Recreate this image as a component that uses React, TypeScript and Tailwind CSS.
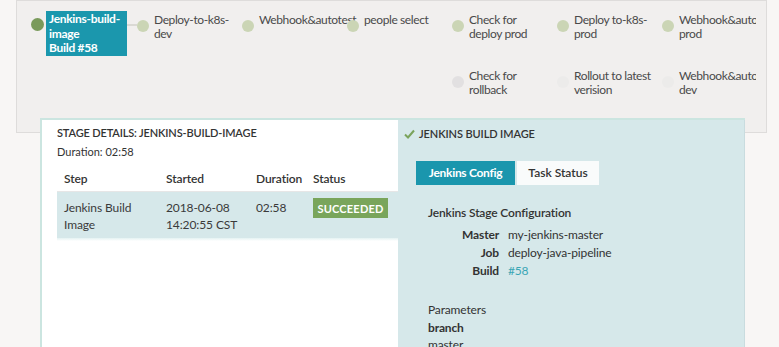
import React from "react";

function Dot({ color }: { color: string }) {
  return <div className="w-[12px] h-[12px] rounded-full shrink-0 mt-[7px]" style={{ backgroundColor: color }} />;
}

function Node({ color, lines }: { color: string; lines: string[] }) {
  return (
    <div className="w-[105px] shrink-0 flex items-start">
      <Dot color={color} />
      <div className="ml-[5px] text-[12px] leading-[14px] text-[#4a4a4a] whitespace-nowrap tracking-[-0.4px]">
        {lines.map((l, i) => (
          <div key={i}>{l}</div>
        ))}
      </div>
    </div>
  );
}

export default function App() {
  return (
    <div className="h-[347px] overflow-hidden bg-[#f8f6f5] font-['Lato',sans-serif] text-[#333]">
      {/* pipeline graph panel */}
      <div className="ml-4 w-[751px] h-[133px] bg-[#f1efee] border border-[#dedcdb]">
        <div className="ml-[14px] w-[725px] overflow-hidden pt-[10px]">
          <div className="flex items-start">
            <div className="w-[106px] shrink-0 flex items-start">
              <div className="w-[13px] h-[13px] rounded-full bg-[#7a9a5b] mt-[7px] shrink-0" />
              <div className="ml-[2px] w-[81px] h-[45px] bg-[#1b97ad] text-white font-bold text-[12px] leading-[14.5px] px-[3px] pt-[1px] tracking-[-0.3px]">
                <div>Jenkins-build-</div>
                <div>image</div>
                <div>Build #58</div>
              </div>
              <div className="w-[10px] h-[2px] bg-[#dad9d4] mt-[13px]" />
            </div>
            <div className="flex items-start mt-[2px]">
              <Node color="#cbd5b5" lines={["Deploy-to-k8s-", "dev"]} />
              <Node color="#cbd5b5" lines={["Webhook&autotest"]} />
              <Node color="#cbd5b5" lines={["people select"]} />
              <Node color="#cbd5b5" lines={["Check for", "deploy prod"]} />
              <Node color="#cbd5b5" lines={["Deploy to-k8s-", "prod"]} />
              <Node color="#cbd5b5" lines={["Webhook&autotest", "prod"]} />
            </div>
          </div>
          <div className="flex items-start mt-[13px] pl-[421px]">
            <Node color="#e2e0e1" lines={["Check for", "rollback"]} />
            <Node color="#ecebea" lines={["Rollout to latest", "verision"]} />
            <Node color="#ecebea" lines={["Webhook&autotest", "dev"]} />
          </div>
        </div>
      </div>

      {/* stage details panel */}
      <div className="relative -mt-[15px] ml-[40px] w-[705px] h-[260px] border-2 border-r-0 border-b-0 border-[#cbe5e0] flex">
        <div className="w-[356px] bg-white pl-[15px] pt-[6px]">
          <div className="text-[11px] leading-[14px] font-semibold tracking-[-0.15px]">STAGE DETAILS: JENKINS-BUILD-IMAGE</div>
          <div className="text-[11px] leading-[14px] mt-[5px]">Duration: 02:58</div>
          <div className="mt-[11px] text-[12px] tracking-[-0.1px]">
            <div className="flex h-[22px] items-start font-semibold border-b border-[#e6e6e6]">
              <div className="w-[102px] pl-[7px]">Step</div>
              <div className="w-[90px] pl-[7px]">Started</div>
              <div className="w-[57px] pl-[7px]">Duration</div>
              <div className="w-[92px] pl-[7px]">Status</div>
            </div>
            <div className="flex h-[46px] bg-[#d6e8ea] pt-[7px] leading-[17px] text-[#3a3a3a]">
              <div className="w-[102px] pl-[7px]">
                <div>Jenkins Build</div>
                <div>Image</div>
              </div>
              <div className="w-[90px] pl-[7px]">
                <div>2018-06-08</div>
                <div>14:20:55 CST</div>
              </div>
              <div className="w-[57px] pl-[7px]">02:58</div>
              <div className="w-[92px] pl-[7px]">
                <div className="w-[75px] h-[20px] -mt-[1px] bg-[#79a55b] text-white font-bold text-[11px] flex items-center justify-center tracking-[0.2px]">
                  SUCCEEDED
                </div>
              </div>
            </div>
            <div className="h-[3px] bg-gradient-to-b from-[#e4f2f2] to-white" />
          </div>
        </div>
        <div className="flex-1 bg-[#d6e8ea] border-r border-[#c9dcdf] pt-[6px]">
          <div className="flex items-center ml-[6px] h-[16px]">
            <svg width="11" height="10" viewBox="0 0 11 10">
              <path d="M1 5.5 L4 8.5 L10 1.5" fill="none" stroke="#7aa35b" strokeWidth="2" />
            </svg>
            <span className="ml-[4px] text-[11px] font-semibold tracking-[-0.1px]">JENKINS BUILD IMAGE</span>
          </div>
          <div className="flex ml-[18px] mt-[19px] gap-[2px] text-[12px] font-bold h-[24px]">
            <div className="w-[99px] bg-[#1a96ad] text-white flex items-center justify-center tracking-[-0.3px]">Jenkins Config</div>
            <div className="w-[82px] bg-[#f9fbfb] text-[#333] flex items-center justify-center font-semibold">Task Status</div>
          </div>
          <div className="ml-[30px] mt-[20px] text-[12px] tracking-[-0.15px]">
            <div className="font-semibold leading-[16px]">Jenkins Stage Configuration</div>
            <div className="mt-[5px] leading-[18px]">
              <div className="flex">
                <div className="w-[71px] text-right font-bold">Master</div>
                <div className="ml-[9px]">my-jenkins-master</div>
              </div>
              <div className="flex">
                <div className="w-[71px] text-right font-bold">Job</div>
                <div className="ml-[9px]">deploy-java-pipeline</div>
              </div>
              <div className="flex">
                <div className="w-[71px] text-right font-bold">Build</div>
                <div className="ml-[9px] text-[#3aa6b5]">#58</div>
              </div>
            </div>
            <div className="mt-[21px] leading-[17px]">Parameters</div>
            <div className="font-bold leading-[17px] mt-[1px]">branch</div>
            <div className="leading-[17px]">master</div>
          </div>
        </div>
      </div>
    </div>
  );
}
